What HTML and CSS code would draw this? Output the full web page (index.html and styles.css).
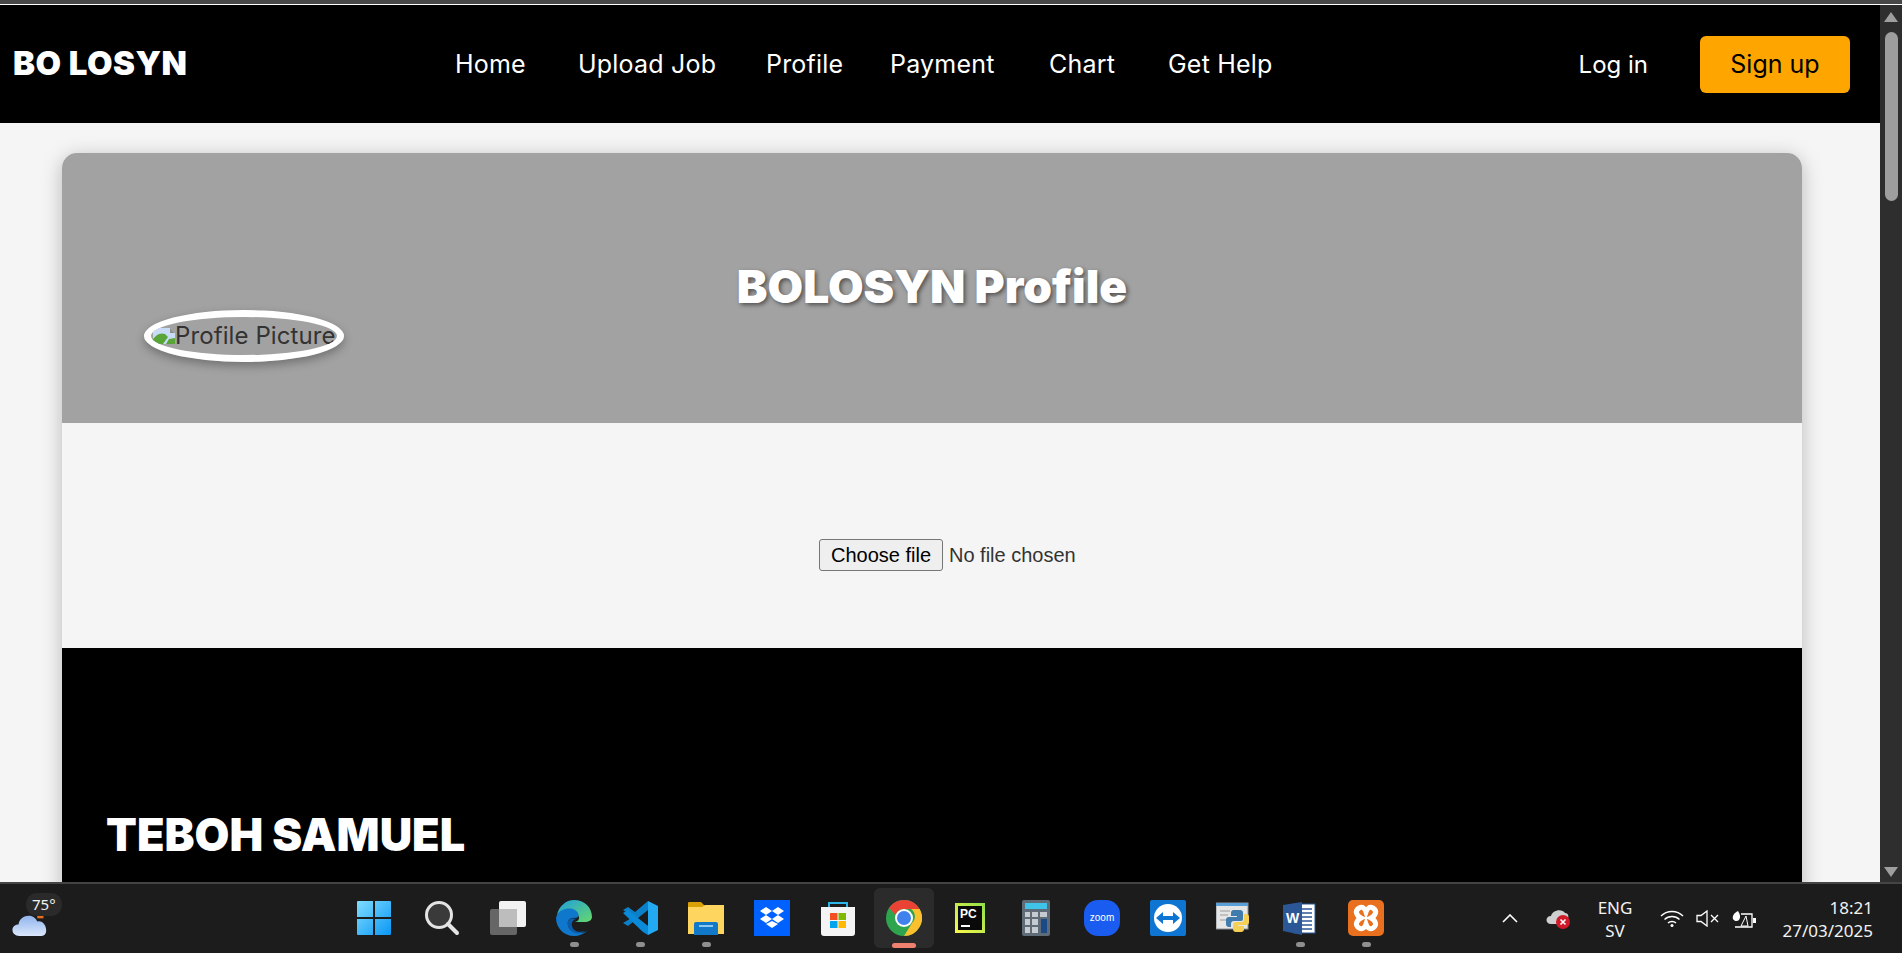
FILE: index.html
```html
<!DOCTYPE html>
<html lang="en">

<head>
    <meta charset="UTF-8">
    <meta name="viewport" content="width=device-width, initial-scale=1.0">
    <title>BOLOSYN Profile</title>
    <link rel="stylesheet" href="styles.css">
</head>

<body>
    <div class="window-edge"></div>

    <div class="browser-view">
        <div class="page">
            <nav class="navbar">
                <a class="logo" href="#">BO LOSYN</a>
                <div class="nav-links">
                    <a href="#">Home</a>
                    <a href="#">Upload Job</a>
                    <a href="#">Profile</a>
                    <a href="#">Payment</a>
                    <a href="#">Chart</a>
                    <a href="#">Get Help</a>
                </div>
                <div class="nav-auth">
                    <a class="login" href="#">Log in</a>
                    <a class="signup" href="#">Sign up</a>
                </div>
            </nav>

            <main class="card">
                <header class="card-header">
                    <h1>BOLOSYN Profile</h1>
                    <div class="avatar">
                        <svg class="broken-img" viewBox="0 0 24 16">
                            <path d="M2 0h17l5 5v11H2z" fill="#c9dcf7"/>
                            <path d="M19 0l5 5h-5z" fill="#8f8f8f"/>
                            <path d="M0 14c4-7 9-10 14-8l3 3-5 7H0z" fill="#5aa53a"/>
                            <path d="M18 11l6-1v6h-9z" fill="#5aa53a"/>
                        </svg>
                        <span>Profile Picture</span>
                    </div>
                </header>

                <section class="upload">
                    <button type="button" class="file-btn">Choose file</button>
                    <span class="file-name">No file chosen</span>
                </section>

                <section class="details">
                    <h2>TEBOH SAMUEL</h2>
                </section>
            </main>
        </div>

        <div class="scrollbar">
            <span class="arrow-up"></span>
            <span class="thumb"></span>
            <span class="arrow-down"></span>
        </div>
    </div>

    <footer class="taskbar">
        <div class="weather">
            <svg class="weather-cloud" viewBox="0 0 36 26">
                <defs>
                    <linearGradient id="cloudFill" x1="0" y1="0" x2="0" y2="1">
                        <stop offset="0" stop-color="#8fb4ee"/>
                        <stop offset="1" stop-color="#dbe7fb"/>
                    </linearGradient>
                </defs>
                <rect x="24" y="2" width="6" height="6" fill="#e8701a"/>
                <path d="M7 25c-9 0-9-11-1-11 1-9 14-12 18-3 9-2 12 14 4 14z" fill="url(#cloudFill)"/>
            </svg>
            <span class="weather-temp">75°</span>
        </div>

        <div class="task-icons">
            <!-- start -->
            <div class="task-icon">
                <svg viewBox="0 0 36 36">
                    <defs>
                        <linearGradient id="winBlue" x1="0" y1="0" x2="1" y2="1">
                            <stop offset="0" stop-color="#7fdcff"/>
                            <stop offset="1" stop-color="#0a97f5"/>
                        </linearGradient>
                    </defs>
                    <path d="M1 2a1 1 0 0 1 1-1h15v16H1zM19 1h15a1 1 0 0 1 1 1v15H19zM1 19h16v16H2a1 1 0 0 1-1-1zM19 19h16v15a1 1 0 0 1-1 1H19z" fill="url(#winBlue)"/>
                </svg>
            </div>
            <!-- search -->
            <div class="task-icon">
                <svg viewBox="0 0 36 36">
                    <circle cx="15" cy="15" r="12.5" fill="#3a3a3a" stroke="#e4e4e4" stroke-width="3"/>
                    <path d="M24 24l9 9" stroke="#e4e4e4" stroke-width="4" stroke-linecap="round"/>
                </svg>
            </div>
            <!-- task view -->
            <div class="task-icon">
                <svg viewBox="0 0 36 36">
                    <rect x="0" y="9" width="27" height="26" rx="2" fill="#666"/>
                    <rect x="9" y="1" width="27" height="26" rx="2" fill="#f2f2f2"/>
                    <rect x="9" y="9" width="18" height="18" fill="#bdbdbd"/>
                </svg>
            </div>
            <!-- edge -->
            <div class="task-icon has-dot">
                <svg viewBox="0 0 36 36">
                    <defs>
                        <linearGradient id="edgeTop" x1="0" y1="0" x2="1" y2="1">
                            <stop offset="0" stop-color="#1f9fe0"/>
                            <stop offset="1" stop-color="#66d86a"/>
                        </linearGradient>
                    </defs>
                    <path d="M1 15C3 6 10 0 18 0c10 0 18 7 18 17 0 3-3 5-8 5h-9c4-1 5-4 3-7-4-6-17-6-21 0z" fill="url(#edgeTop)"/>
                    <path d="M1 15c3-6 12-8 18-5 4 2 5 7 1 8-6-1-9 2-8 7 1 5 6 8 12 8 3 0 6-1 8-3-4 4-9 6-14 6C8 36 0 28 0 18z" fill="#0f78cc"/>
                    <path d="M13 19c-3 5-1 12 6 14 3 1 7 0 10-2-6 2-12 0-13-5-1-3 1-6 4-7-3-1-5-1-7 0z" fill="#0b5ba8"/>
                </svg>
            </div>
            <!-- vs code -->
            <div class="task-icon has-dot">
                <svg viewBox="0 0 36 36">
                    <path d="M26 1l10 5v24l-10 5z" fill="#23a9f2"/>
                    <path d="M26 1v9L6 26l-5-3 10-6L1 10l5-3 7 5z" fill="#0c7fc9"/>
                    <path d="M26 35v-9L6 10l-5 3 20 19z" fill="#0a8ad8"/>
                </svg>
            </div>
            <!-- files -->
            <div class="task-icon has-dot">
                <svg viewBox="0 0 36 36">
                    <path d="M0 3a1 1 0 0 1 1-1h12l4 4h19v28H0z" fill="#d9a106"/>
                    <path d="M0 7h14l3-2h19v29H0z" fill="#fdd55f"/>
                    <path d="M6 24a2 2 0 0 1 2-2h20a2 2 0 0 1 2 2v11H6z" fill="#1279c9"/>
                    <rect x="11" y="25" width="14" height="2" fill="#8cc8f0"/>
                </svg>
            </div>
            <!-- dropbox -->
            <div class="task-icon">
                <svg viewBox="0 0 36 36">
                    <rect width="36" height="36" fill="#0061fe"/>
                    <path d="M12 7l6 4-6 4-6-4zM24 7l6 4-6 4-6-4zM12 15l6 4-6 4-6-4zM24 15l6 4-6 4-6-4zM18 21l6 3-6 4-6-4z" fill="#fff"/>
                </svg>
            </div>
            <!-- store -->
            <div class="task-icon">
                <svg viewBox="0 0 36 36">
                    <path d="M9 9V3h18v6" fill="none" stroke="#2cb5e8" stroke-width="2"/>
                    <path d="M1 7h34v26a3 3 0 0 1-3 3H4a3 3 0 0 1-3-3z" fill="#f4f4f4"/>
                    <rect x="10" y="13" width="7.5" height="7" fill="#f25022"/>
                    <rect x="18.5" y="13" width="7.5" height="7" fill="#7fba00"/>
                    <rect x="10" y="21" width="7.5" height="7" fill="#00a4ef"/>
                    <rect x="18.5" y="21" width="7.5" height="7" fill="#ffb900"/>
                </svg>
            </div>
            <!-- chrome -->
            <div class="task-icon is-active">
                <svg viewBox="0 0 36 36">
                    <circle cx="18" cy="18" r="18" fill="#2fa44f"/>
                    <path d="M18 0a18 18 0 0 1 15.6 9H18a9 9 0 0 0-8.5 6L3.2 7.8A18 18 0 0 1 18 0z" fill="#ea4335"/>
                    <path d="M33.6 9A18 18 0 0 1 18 36l8-13a9 9 0 0 0-1-14z" fill="#fbc02d"/>
                    <circle cx="18" cy="18" r="9" fill="#fff"/>
                    <circle cx="18" cy="18" r="7" fill="#3f82ee"/>
                </svg>
            </div>
            <!-- pycharm -->
            <div class="task-icon">
                <svg viewBox="0 0 36 36">
                    <defs>
                        <linearGradient id="pcEdge" x1="0" y1="1" x2="1" y2="0">
                            <stop offset="0" stop-color="#fcf84a"/>
                            <stop offset="1" stop-color="#8fe04a"/>
                        </linearGradient>
                    </defs>
                    <rect x="3" y="3" width="30" height="30" fill="url(#pcEdge)"/>
                    <rect x="6" y="6" width="24" height="24" fill="#0a0a0a"/>
                    <text class="pc-text" x="8" y="18">PC</text>
                    <rect x="9" y="25" width="9" height="2" fill="#fff"/>
                </svg>
            </div>
            <!-- calculator -->
            <div class="task-icon">
                <svg viewBox="0 0 36 36">
                    <rect x="4" y="0" width="28" height="36" rx="2" fill="#5f6b76"/>
                    <rect x="7" y="3" width="22" height="6" fill="#3fc3e8"/>
                    <path d="M7 12h5v5H7zM14 12h6v5h-6zM22 12h7v5h-7zM7 19h5v6H7zM14 19h6v6h-6zM7 27h5v6H7zM14 27h6v6h-6z" fill="#c5cbd1"/>
                    <rect x="23" y="19" width="6" height="14" fill="#1c4a86"/>
                </svg>
            </div>
            <!-- zoom -->
            <div class="task-icon">
                <svg viewBox="0 0 36 36">
                    <rect width="36" height="36" rx="14" fill="#1a5cf0"/>
                    <text class="zoom-text" x="18" y="21" text-anchor="middle">zoom</text>
                </svg>
            </div>
            <!-- teamviewer -->
            <div class="task-icon">
                <svg viewBox="0 0 36 36">
                    <rect width="36" height="36" rx="2" fill="#0e76d2"/>
                    <circle cx="18" cy="18" r="14" fill="#fff"/>
                    <path d="M6 18l7-6v4h10v-4l7 6-7 6v-4H13v4z" fill="#0e76d2"/>
                </svg>
            </div>
            <!-- python -->
            <div class="task-icon">
                <svg viewBox="0 0 36 36">
                    <rect x="0" y="3" width="32" height="26" fill="#e6e6e6" stroke="#8a8f96"/>
                    <rect x="0" y="3" width="32" height="3" fill="#5a9fd8"/>
                    <path d="M4 11h10M4 15h8M4 20h9" stroke="#9a9a9a"/>
                    <path d="M17 10h7a3 3 0 0 1 3 3v6a2 2 0 0 1-2 2h-7a3 3 0 0 0-3 3v3h-2a3 3 0 0 1-3-3v-4a3 3 0 0 1 3-3h8v-1h-6v-3a3 3 0 0 1 2-3z" fill="#3f7cad"/>
                    <path d="M28 14h2a3 3 0 0 1 3 3v5a3 3 0 0 1-3 3h-8v1h6v3a3 3 0 0 1-3 3h-5a3 3 0 0 1-3-3v-4a3 3 0 0 1 3-3h6a3 3 0 0 0 2-3z" fill="#f6cf55"/>
                </svg>
            </div>
            <!-- word -->
            <div class="task-icon has-dot">
                <svg viewBox="0 0 36 36">
                    <rect x="12" y="4" width="21" height="29" fill="#fff" stroke="#2b5797"/>
                    <path d="M16 9h14M16 13h14M16 17h14M16 21h14M16 25h14M16 29h14" stroke="#2b5797" stroke-width="1.5"/>
                    <path d="M1 5l19-3v33L1 31z" fill="#2b5797"/>
                    <text class="word-text" x="10.5" y="23" text-anchor="middle">W</text>
                </svg>
            </div>
            <!-- xampp -->
            <div class="task-icon has-dot">
                <svg viewBox="0 0 36 36">
                    <rect width="36" height="36" rx="5" fill="#e8701f"/>
                    <path d="M11 8c4-2 6 1 7 4 1-3 3-6 7-4 5 3 2 8-2 10 4 2 7 7 2 10-4 2-6-1-7-4-1 3-3 6-7 4-5-3-2-8 2-10-4-2-7-7-2-10z" fill="none" stroke="#fff" stroke-width="5"/>
                </svg>
            </div>
        </div>

        <div class="tray">
            <svg class="tray-chevron" viewBox="0 0 16 9">
                <path d="M1 8l7-7 7 7" fill="none" stroke="#fff" stroke-width="1.6"/>
            </svg>
            <svg class="tray-cloud" viewBox="0 0 25 20">
                <path d="M5 15c-6 0-6-8 0-8 1-6 11-8 14-3 3 0 4 3 3 5l-6 6z" fill="#cfcfcf"/>
                <circle cx="17" cy="13" r="7" fill="#d01a2a"/>
                <path d="M14.5 10.5l5 5m0-5l-5 5" stroke="#fff" stroke-width="1.6"/>
            </svg>
            <div class="tray-lang">
                <span>ENG</span>
                <span>SV</span>
            </div>
            <svg class="tray-wifi" viewBox="0 0 24 17">
                <path d="M1 6c6-6 16-6 22 0M4.5 9.5c4-4 11-4 15 0M8 13c2-2 6-2 8 0" fill="none" stroke="#fff" stroke-width="1.4"/>
                <circle cx="12" cy="15.5" r="1.5" fill="#fff"/>
            </svg>
            <svg class="tray-sound" viewBox="0 0 23 17">
                <path d="M1 5.500h4L11 1v15l-6-4.500H1z" fill="none" stroke="#fff" stroke-width="1.3"/>
                <path d="M15 5l7 7m0-7l-7 7" stroke="#fff" stroke-width="1.3"/>
            </svg>
            <svg class="tray-battery" viewBox="0 0 24 18">
                <path d="M9 4h11v13H3" fill="none" stroke="#fff" stroke-width="1.3"/>
                <path d="M21 8h3v5h-3z" fill="#fff"/>
                <path d="M6 1C2 3 0 6 1 9c1 2 4 3 6 1 2-3 1-6-1-9z" fill="#fff"/>
                <path d="M14 6l-5 10h7z" fill="none" stroke="#fff"/>
            </svg>
            <div class="tray-clock">
                <span>18:21</span>
                <span>27/03/2025</span>
            </div>
        </div>
    </footer>
</body>

</html>
```

FILE: styles.css
```css
* {
    box-sizing: border-box;
}

html, body {
    height: 100%;
}

body {
    font-family: Inter, "Liberation Sans", sans-serif;
    margin: 0;
    padding: 0;
    display: flex;
    flex-direction: column;
    overflow: hidden;
    background-color: #1c1c1c;
}

a {
    text-decoration: none;
}

.window-edge {
    height: 5px;
    flex: none;
    background-color: #484848;
    border-bottom: 1px solid #fff;
}

.browser-view {
    flex: 1;
    min-height: 0;
    display: flex;
}

.page {
    flex: 1;
    min-width: 0;
    overflow: hidden;
    background-color: #f5f5f5;
}

/* nav */
.navbar {
    height: 118px;
    padding: 0 30px 0 13px;
    display: flex;
    align-items: center;
    background-color: #000;
}

.logo {
    width: 178px;
    margin-bottom: 2px;
    color: #fff;
    font-size: 33px;
    font-weight: 900;
    letter-spacing: 0.5px;
    white-space: nowrap;
}

.nav-links {
    margin-left: 264px;
    margin-bottom: 1px;
    display: grid;
    grid-template-columns: 72px 137px 73px 108px 68px 103px;
    gap: 51px;
}

.nav-links a {
    color: #fff;
    font-size: 25px;
    letter-spacing: 0.2px;
    white-space: nowrap;
}

.nav-auth {
    margin-left: auto;
    display: flex;
    align-items: center;
    gap: 52px;
}

.login {
    color: #fff;
    font-size: 24px;
}

.signup {
    width: 150px;
    height: 57px;
    display: flex;
    align-items: center;
    justify-content: center;
    background-color: #ffa500;
    border-radius: 6px;
    color: #000;
    font-size: 25px;
}

/* card */
.card {
    margin: 30px 78px 0 62px;
    border-radius: 15px 15px 0 0;
    box-shadow: 0 4px 20px rgba(0, 0, 0, 0.25);
    overflow: hidden;
}

.card-header {
    height: 270px;
    padding: 109px 0 0 82px;
    background-color: #a2a2a2;
}

.card-header h1 {
    margin: 0 0 0 -82px;
    text-align: center;
    color: #fff;
    font-size: 46px;
    line-height: 48px;
    font-weight: 900;
    text-shadow: 2px 2px 4px rgba(0, 0, 0, 0.5);
}

.avatar {
    width: 200px;
    height: 52px;
    border: 7px solid #fff;
    border-radius: 50%;
    box-shadow: 0 4px 10px rgba(0, 0, 0, 0.3);
    overflow: hidden;
    display: flex;
    align-items: center;
    color: #333;
    font-size: 24px;
    letter-spacing: 0.1px;
    white-space: nowrap;
}

.avatar span {
    margin-bottom: 2px;
}

.broken-img {
    width: 24px;
    height: 16px;
    flex: none;
}

.upload {
    height: 225px;
    padding: 116px 0 0 31px;
    display: flex;
    justify-content: center;
    align-items: flex-start;
    gap: 6px;
    background-color: #f5f5f5;
    font-family: "Liberation Sans", Arial, sans-serif;
    font-size: 20px;
}

.file-btn {
    width: 124px;
    height: 32px;
    padding: 0;
    background-color: #efefef;
    border: 1px solid #767676;
    border-radius: 3px;
    color: #000;
    font-family: inherit;
    font-size: 20px;
}

.file-name {
    width: 127px;
    color: #333;
    line-height: 32px;
    white-space: nowrap;
}

.details {
    height: 400px;
    padding: 158px 44px 0;
    background-color: #000;
}

.details h2 {
    margin: 0;
    color: #fff;
    font-size: 45px;
    line-height: 58px;
    font-weight: 900;
}

/* scrollbar */
.scrollbar {
    width: 22px;
    flex: none;
    display: flex;
    flex-direction: column;
    align-items: center;
    background-color: #2e2e2e;
}

.arrow-up, .arrow-down {
    width: 0;
    height: 0;
    flex: none;
    border-left: 7px solid transparent;
    border-right: 7px solid transparent;
}

.arrow-up {
    margin-top: 7px;
    border-bottom: 10px solid #9e9e9e;
}

.arrow-down {
    margin-bottom: 5px;
    border-top: 10px solid #9e9e9e;
}

.thumb {
    width: 13px;
    height: 169px;
    margin-top: 10px;
    margin-bottom: auto;
    background-color: #9e9e9e;
    border-radius: 7px;
}

/* taskbar */
.taskbar {
    height: 71px;
    flex: none;
    display: flex;
    background-color: #1c1c1c;
    border-top: 2px solid #444;
    color: #f2f2f2;
}

.weather {
    width: 343px;
    flex: none;
    padding: 9px 0 0 12px;
    display: flex;
    align-items: flex-start;
}

.weather-cloud {
    width: 38px;
    height: 27px;
    flex: none;
    margin-top: 17px;
}

.weather-temp {
    height: 23px;
    margin-left: -24px;
    padding: 0 6px;
    background-color: #2a2a2a;
    border-radius: 11px;
    font-family: "Noto Sans", sans-serif;
    font-size: 15px;
    line-height: 23px;
}

.task-icons {
    display: flex;
    width: 1056px;
    flex: none;
}

.task-icon {
    position: relative;
    width: 66px;
    height: 69px;
    flex: none;
    display: flex;
    align-items: flex-start;
    justify-content: center;
    padding-top: 16px;
}

.task-icon:first-child {
    padding-right: 4px;
}

.task-icon svg {
    width: 36px;
    height: 36px;
}

.has-dot::after {
    content: "";
    position: absolute;
    left: 28.5px;
    top: 58px;
    width: 9px;
    height: 5px;
    border-radius: 3px;
    background-color: #8f8f8f;
}

.is-active::before {
    content: "";
    position: absolute;
    left: 3px;
    top: 4px;
    width: 60px;
    height: 60px;
    border-radius: 6px;
    background-color: #2b2b2b;
}

.is-active svg {
    position: relative;
}

.is-active::after {
    content: "";
    position: absolute;
    left: 21px;
    top: 59px;
    width: 24px;
    height: 5px;
    border-radius: 3px;
    background-color: #f08070;
}

.pc-text {
    fill: #fff;
    font-family: "Liberation Sans", sans-serif;
    font-size: 12px;
    font-weight: 700;
}

.zoom-text {
    fill: #fff;
    font-family: "Liberation Sans", sans-serif;
    font-size: 10px;
}

.word-text {
    fill: #fff;
    font-family: "Liberation Sans", sans-serif;
    font-size: 14px;
    font-weight: 700;
}

.tray {
    flex: 1;
    display: flex;
    align-items: center;
    font-family: "Noto Sans", sans-serif;
    font-size: 17px;
}

.tray-chevron {
    width: 16px;
    height: 9px;
    flex: none;
    margin-left: 103px;
}

.tray-cloud {
    width: 25px;
    height: 20px;
    flex: none;
    margin-left: 28px;
}

.tray-lang {
    width: 34px;
    margin-left: 27px;
    display: flex;
    flex-direction: column;
    align-items: center;
    line-height: 23px;
}

.tray-wifi {
    width: 24px;
    height: 17px;
    flex: none;
    margin-left: 28px;
}

.tray-sound {
    width: 23px;
    height: 17px;
    flex: none;
    margin-left: 12px;
}

.tray-battery {
    width: 24px;
    height: 18px;
    flex: none;
    margin-left: 13px;
}

.tray-clock {
    margin-left: auto;
    margin-right: 29px;
    display: flex;
    flex-direction: column;
    align-items: flex-end;
    line-height: 23px;
}
```
